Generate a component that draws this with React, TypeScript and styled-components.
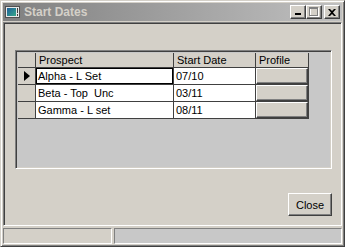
import React from "react";
import styled, { createGlobalStyle } from "styled-components";

const GlobalStyle = createGlobalStyle`
  html, body {
    margin: 0;
    padding: 0;
    background: #d4d0c8;
  }
  body {
    font-family: "Liberation Sans", Arial, sans-serif;
    font-size: 11px;
    color: #000;
  }
`;

const Window = styled.div`
  width: 345px;
  height: 247px;
  box-sizing: border-box;
  background: #d4d0c8;
  border: 1px solid;
  border-color: #d4d0c8 #404040 #404040 #d4d0c8;
  box-shadow: inset 1px 1px 0 #fff, inset -1px -1px 0 #808080;
  padding: 2px;
  display: flex;
  flex-direction: column;
`;

const TitleBar = styled.div`
  height: 18px;
  flex: none;
  display: flex;
  align-items: center;
  padding: 0 2px;
  background: linear-gradient(to right, #808080, #c0c0c0);
`;

const Title = styled.span`
  margin-left: 3px;
  font-weight: bold;
  font-size: 12px;
  color: #d4d0c8;
  white-space: nowrap;
`;

const CaptionButtons = styled.div`
  margin-left: auto;
  display: flex;
  align-items: center;
`;

const CaptionButton = styled.div<{ $gap?: boolean }>`
  width: 16px;
  height: 14px;
  box-sizing: border-box;
  margin-left: ${({ $gap }) => ($gap ? "2px" : "0")};
  background: #d4d0c8;
  border: 1px solid;
  border-color: #fff #404040 #404040 #fff;
  box-shadow: inset -1px -1px 0 #808080;
  display: flex;
  align-items: center;
  justify-content: center;
`;

const Client = styled.div`
  margin-top: 1px;
  height: 204px;
  flex: none;
  box-sizing: border-box;
  border: 1px solid;
  border-color: #808080 #fff #fff #808080;
  box-shadow: inset 1px 1px 0 #404040, inset -1px -1px 0 #d4d0c8;
  padding: 27px 9px 9px 11px;
  display: flex;
  flex-direction: column;
`;

const GridFrame = styled.div`
  height: 119px;
  box-sizing: border-box;
  border: 1px solid;
  border-color: #808080 #fff #fff #808080;
  box-shadow: inset 1px 1px 0 #404040, inset -1px -1px 0 #d4d0c8;
  padding: 2px;
  background: #c8c8c8;
`;

const Table = styled.div`
  display: grid;
  grid-template-columns: 18px 138px 82px 53px;
  grid-template-rows: 15px repeat(3, 17px);
`;

const HeaderCell = styled.div`
  box-sizing: border-box;
  background: #d4d0c8;
  border-right: 1px solid #404040;
  border-bottom: 1px solid #404040;
  padding-left: 3px;
  line-height: 14px;
  white-space: nowrap;
`;

const RowHeader = styled.div`
  box-sizing: border-box;
  background: #d4d0c8;
  border-right: 1px solid #404040;
  border-bottom: 1px solid #404040;
  display: flex;
  align-items: center;
  justify-content: center;
`;

const Cell = styled.div<{ $current?: boolean }>`
  box-sizing: border-box;
  background: #fff;
  border-right: 1px solid #404040;
  border-bottom: 1px solid #404040;
  padding-left: 2px;
  line-height: 16px;
  white-space: pre;
  box-shadow: ${({ $current }) => ($current ? "inset 0 0 0 1px #000" : "none")};
`;

const ButtonCell = styled.div`
  box-sizing: border-box;
  background: #fff;
  border-right: 1px solid #404040;
  border-bottom: 1px solid #404040;
  display: flex;
`;

const CellButton = styled.div`
  flex: 1;
  box-sizing: border-box;
  background: #d4d0c8;
  border: 1px solid;
  border-color: #fff #404040 #404040 #fff;
  box-shadow: inset -1px -1px 0 #808080;
`;

const Spacer = styled.div`
  flex: 1;
`;

const Footer = styled.div`
  display: flex;
  justify-content: flex-end;
`;

const PushButton = styled.button`
  width: 44px;
  height: 23px;
  box-sizing: border-box;
  padding: 0;
  background: #d4d0c8;
  border: 1px solid;
  border-color: #fff #404040 #404040 #fff;
  box-shadow: inset -1px -1px 0 #808080;
  font-family: "Liberation Sans", Arial, sans-serif;
  font-size: 11px;
  color: #000;
`;

const StatusBar = styled.div`
  margin-top: 2px;
  height: 16px;
  flex: none;
  display: flex;
  gap: 2px;
`;

const StatusPanel = styled.div<{ $width?: number; $shade?: boolean }>`
  box-sizing: border-box;
  flex: ${({ $width }) => ($width ? `0 0 ${$width}px` : "1")};
  background: ${({ $shade }) => ($shade ? "#c8c8c8" : "#d4d0c8")};
  border: 1px solid;
  border-color: #808080 #fff #fff #808080;
`;

const AppIcon = () => (
  <svg width="16" height="16" viewBox="0 0 16 16">
    <defs>
      <linearGradient id="ico" x1="0" y1="0" x2="1" y2="1">
        <stop offset="0" stopColor="#1f5f9a" />
        <stop offset="1" stopColor="#36a88a" />
      </linearGradient>
    </defs>
    <rect x="0.5" y="2.5" width="14" height="11" fill="#e8e8e8" stroke="#505050" />
    <rect x="2" y="4" width="9" height="8" fill="url(#ico)" />
    <rect x="12" y="4" width="1" height="5" fill="#404040" />
    <rect x="12" y="10" width="1" height="2" fill="#404040" />
  </svg>
);

const rows = [
  { prospect: "Alpha - L Set", date: "07/10" },
  { prospect: "Beta - Top  Unc", date: "03/11" },
  { prospect: "Gamma - L set", date: "08/11" },
];

export default function App() {
  return (
    <>
      <GlobalStyle />
      <Window>
        <TitleBar>
          <AppIcon />
          <Title>Start Dates</Title>
          <CaptionButtons>
            <CaptionButton>
              <svg width="8" height="8" viewBox="0 0 8 8">
                <rect x="1" y="5" width="6" height="2" fill="#000" />
              </svg>
            </CaptionButton>
            <CaptionButton>
              <svg width="10" height="10" viewBox="0 0 10 10">
                <rect x="1.5" y="1.5" width="8" height="8" fill="none" stroke="#fff" />
                <rect x="0.5" y="0.5" width="8" height="8" fill="none" stroke="#808080" />
                <rect x="1" y="1" width="7" height="1" fill="#808080" />
              </svg>
            </CaptionButton>
            <CaptionButton $gap>
              <svg width="8" height="7" viewBox="0 0 8 7">
                <path d="M0 0h2l2 2 2-2h2L5 3.5 8 7H6L4 5 2 7H0l3-3.5z" fill="#000" />
              </svg>
            </CaptionButton>
          </CaptionButtons>
        </TitleBar>
        <Client>
          <GridFrame>
            <Table>
              <HeaderCell />
              <HeaderCell>Prospect</HeaderCell>
              <HeaderCell>Start Date</HeaderCell>
              <HeaderCell>Profile</HeaderCell>
              {rows.map((r, i) => (
                <React.Fragment key={r.prospect}>
                  <RowHeader>
                    {i === 0 && (
                      <svg width="6" height="10" viewBox="0 0 6 10">
                        <path d="M0 0L6 5L0 10z" fill="#000" />
                      </svg>
                    )}
                  </RowHeader>
                  <Cell $current={i === 0}>{r.prospect}</Cell>
                  <Cell>{r.date}</Cell>
                  <ButtonCell>
                    <CellButton />
                  </ButtonCell>
                </React.Fragment>
              ))}
            </Table>
          </GridFrame>
          <Spacer />
          <Footer>
            <PushButton>Close</PushButton>
          </Footer>
        </Client>
        <StatusBar>
          <StatusPanel $width={109} />
          <StatusPanel $shade />
        </StatusBar>
      </Window>
    </>
  );
}
